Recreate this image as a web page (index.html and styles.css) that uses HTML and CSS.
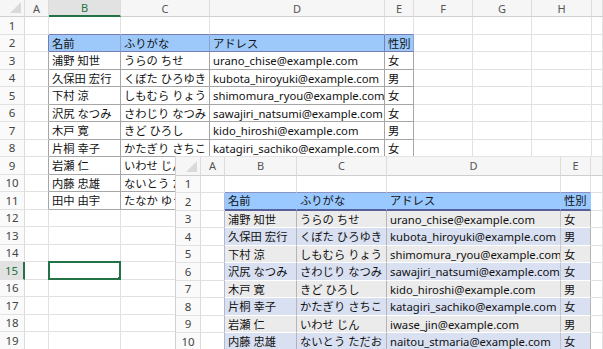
FILE: index.html
```html
<!DOCTYPE html>
<html lang="ja">
<head>
	<meta charset="UTF-8">
	<title>名簿</title>
	<link rel="stylesheet" href="styles.css">
</head>
<body>
	<div class="sheet back">
		<!-- 列見出し -->
		<div class="row">
			<span class="corner"><i></i></span>
			<span class="ch">A</span><span class="ch sel">B</span><span class="ch">C</span><span class="ch">D</span>
			<span class="ch">E</span><span class="ch">F</span><span class="ch">G</span><span class="ch">H</span><span class="ch"></span>
		</div>
		<div class="row">
			<span class="rh">1</span>
			<span class="c"></span><span class="c hb"></span><span class="c hb"></span><span class="c hb"></span>
			<span class="c hb"></span><span class="c"></span><span class="c"></span><span class="c"></span><span class="c"></span>
		</div>
		<div class="row">
			<span class="rh">2</span>
			<span class="c hl"></span><span class="c th">名前</span><span class="c th">ふりがな</span><span class="c th">アドレス</span>
			<span class="c th">性別</span><span class="c"></span><span class="c"></span><span class="c"></span><span class="c"></span>
		</div>
		<div class="row">
			<span class="rh">3</span>
			<span class="c tl"></span><span class="c td">浦野 知世</span><span class="c td">うらの ちせ</span><span class="c td">urano_chise@example.com</span>
			<span class="c td">女</span><span class="c"></span><span class="c"></span><span class="c"></span><span class="c"></span>
		</div>
		<div class="row">
			<span class="rh">4</span>
			<span class="c tl"></span><span class="c td">久保田 宏行</span><span class="c td">くぼた ひろゆき</span><span class="c td">kubota_hiroyuki@example.com</span>
			<span class="c td">男</span><span class="c"></span><span class="c"></span><span class="c"></span><span class="c"></span>
		</div>
		<div class="row">
			<span class="rh">5</span>
			<span class="c tl"></span><span class="c td">下村 涼</span><span class="c td">しもむら りょう</span><span class="c td">shimomura_ryou@example.com</span>
			<span class="c td">女</span><span class="c"></span><span class="c"></span><span class="c"></span><span class="c"></span>
		</div>
		<div class="row">
			<span class="rh">6</span>
			<span class="c tl"></span><span class="c td">沢尻 なつみ</span><span class="c td">さわじり なつみ</span><span class="c td">sawajiri_natsumi@example.com</span>
			<span class="c td">女</span><span class="c"></span><span class="c"></span><span class="c"></span><span class="c"></span>
		</div>
		<div class="row">
			<span class="rh">7</span>
			<span class="c tl"></span><span class="c td">木戸 寛</span><span class="c td">きど ひろし</span><span class="c td">kido_hiroshi@example.com</span>
			<span class="c td">男</span><span class="c"></span><span class="c"></span><span class="c"></span><span class="c"></span>
		</div>
		<div class="row">
			<span class="rh">8</span>
			<span class="c tl"></span><span class="c td">片桐 幸子</span><span class="c td">かたぎり さちこ</span><span class="c td">katagiri_sachiko@example.com</span>
			<span class="c td">女</span><span class="c"></span><span class="c"></span><span class="c"></span><span class="c"></span>
		</div>
		<!-- 9行目以降の右側は前面のシートに隠れる -->
		<div class="row">
			<span class="rh">9</span>
			<span class="c tl"></span><span class="c td">岩瀬 仁</span><span class="c td">いわせ じん</span><span class="c td"></span>
			<span class="c td"></span><span class="c"></span><span class="c"></span><span class="c"></span><span class="c"></span>
		</div>
		<div class="row">
			<span class="rh">10</span>
			<span class="c tl"></span><span class="c td">内藤 忠雄</span><span class="c td">ないとう ただお</span><span class="c td"></span>
			<span class="c td"></span><span class="c"></span><span class="c"></span><span class="c"></span><span class="c"></span>
		</div>
		<div class="row">
			<span class="rh">11</span>
			<span class="c tl"></span><span class="c td">田中 由宇</span><span class="c td">たなか ゆう</span><span class="c td"></span>
			<span class="c td"></span><span class="c"></span><span class="c"></span><span class="c"></span><span class="c"></span>
		</div>
		<div class="row">
			<span class="rh">12</span>
			<span class="c"></span><span class="c"></span><span class="c"></span><span class="c"></span><span class="c"></span>
			<span class="c"></span><span class="c"></span><span class="c"></span><span class="c"></span>
		</div>
		<div class="row">
			<span class="rh">13</span>
			<span class="c"></span><span class="c"></span><span class="c"></span><span class="c"></span><span class="c"></span>
			<span class="c"></span><span class="c"></span><span class="c"></span><span class="c"></span>
		</div>
		<div class="row">
			<span class="rh">14</span>
			<span class="c"></span><span class="c"></span><span class="c"></span><span class="c"></span><span class="c"></span>
			<span class="c"></span><span class="c"></span><span class="c"></span><span class="c"></span>
		</div>
		<div class="row">
			<span class="rh sel">15</span>
			<span class="c"></span><span class="c active"><i class="handle"></i></span><span class="c"></span><span class="c"></span><span class="c"></span>
			<span class="c"></span><span class="c"></span><span class="c"></span><span class="c"></span>
		</div>
		<div class="row">
			<span class="rh">16</span>
			<span class="c"></span><span class="c"></span><span class="c"></span><span class="c"></span><span class="c"></span>
			<span class="c"></span><span class="c"></span><span class="c"></span><span class="c"></span>
		</div>
		<div class="row">
			<span class="rh">17</span>
			<span class="c"></span><span class="c"></span><span class="c"></span><span class="c"></span><span class="c"></span>
			<span class="c"></span><span class="c"></span><span class="c"></span><span class="c"></span>
		</div>
		<div class="row">
			<span class="rh">18</span>
			<span class="c"></span><span class="c"></span><span class="c"></span><span class="c"></span><span class="c"></span>
			<span class="c"></span><span class="c"></span><span class="c"></span><span class="c"></span>
		</div>
		<div class="row">
			<span class="rh">19</span>
			<span class="c"></span><span class="c"></span><span class="c"></span><span class="c"></span><span class="c"></span>
			<span class="c"></span><span class="c"></span><span class="c"></span><span class="c"></span>
		</div>
	</div>

	<!-- テーブル書式を適用した後のシート（上に重ねる） -->
	<div class="sheet front">
		<div class="row">
			<span class="corner"><i></i></span>
			<span class="ch">A</span><span class="ch">B</span><span class="ch">C</span><span class="ch">D</span><span class="ch">E</span><span class="ch"></span>
		</div>
		<div class="row">
			<span class="rh">1</span>
			<span class="c"></span><span class="c hb"></span><span class="c hb"></span><span class="c hb"></span><span class="c hb"></span><span class="c"></span>
		</div>
		<div class="row">
			<span class="rh">2</span>
			<span class="c hl"></span><span class="c fh">名前</span><span class="c fh">ふりがな</span><span class="c fh">アドレス</span><span class="c fh">性別</span><span class="c"></span>
		</div>
		<div class="row odd">
			<span class="rh">3</span>
			<span class="c hl"></span><span class="c fd">浦野 知世</span><span class="c fd">うらの ちせ</span><span class="c fd">urano_chise@example.com</span><span class="c fd">女</span><span class="c"></span>
		</div>
		<div class="row even">
			<span class="rh">4</span>
			<span class="c hl"></span><span class="c fd">久保田 宏行</span><span class="c fd">くぼた ひろゆき</span><span class="c fd">kubota_hiroyuki@example.com</span><span class="c fd">男</span><span class="c"></span>
		</div>
		<div class="row odd">
			<span class="rh">5</span>
			<span class="c hl"></span><span class="c fd">下村 涼</span><span class="c fd">しもむら りょう</span><span class="c fd">shimomura_ryou@example.com</span><span class="c fd">女</span><span class="c"></span>
		</div>
		<div class="row even">
			<span class="rh">6</span>
			<span class="c hl"></span><span class="c fd">沢尻 なつみ</span><span class="c fd">さわじり なつみ</span><span class="c fd">sawajiri_natsumi@example.com</span><span class="c fd">女</span><span class="c"></span>
		</div>
		<div class="row odd">
			<span class="rh">7</span>
			<span class="c hl"></span><span class="c fd">木戸 寛</span><span class="c fd">きど ひろし</span><span class="c fd">kido_hiroshi@example.com</span><span class="c fd">男</span><span class="c"></span>
		</div>
		<div class="row even">
			<span class="rh">8</span>
			<span class="c hl"></span><span class="c fd">片桐 幸子</span><span class="c fd">かたぎり さちこ</span><span class="c fd">katagiri_sachiko@example.com</span><span class="c fd">女</span><span class="c"></span>
		</div>
		<div class="row odd">
			<span class="rh">9</span>
			<span class="c hl"></span><span class="c fd">岩瀬 仁</span><span class="c fd">いわせ じん</span><span class="c fd">iwase_jin@example.com</span><span class="c fd">男</span><span class="c"></span>
		</div>
		<div class="row even">
			<span class="rh">10</span>
			<span class="c hl"></span><span class="c fd">内藤 忠雄</span><span class="c fd">ないとう ただお</span><span class="c fd">naitou_stmaria@example.com</span><span class="c fd">女</span><span class="c"></span>
		</div>
	</div>
</body>
</html>
```

FILE: styles.css
```css
*{
	margin: 0;
	padding: 0;
	box-sizing: border-box;
}
body{
	width: 603px;
	height: 349px;
	overflow: hidden;
	background: #fff;
	position: relative;
	font-family: "Noto Sans", "Noto Sans CJK JP", sans-serif;
	font-size: 11.3px;
	color: #111;
}
.sheet{
	display: grid;
	grid-template-rows: 17px;
	grid-auto-rows: 17.5px;
	background: #fff;
	overflow: hidden;
}
.sheet .row{
	display: contents;
}
.back{
	grid-template-columns: 25px 24px 72px 89px 175px 29px 59px 59px 60px 1fr;
	height: 349px;
}
.front{
	position: absolute;
	left: 175px;
	top: 156px;
	width: 428px;
	height: 193px;
	grid-template-columns: 25px 24px 72px 90px 174px 30px 1fr;
	grid-template-rows: 18.5px;
	border-left: 1px solid #d0d0d0;
	border-top: 1px solid #e4e4e4;
}

/* 見出し */
.corner, .ch, .rh{
	background: #f6f6f6;
	color: #555;
	font-size: 11px;
	border-right: 1px solid #dcdcdc;
	border-bottom: 1px solid #cfcfcf;
	display: flex;
	align-items: center;
	justify-content: center;
	line-height: 1;
}
.rh{
	background: #fafafa;
	color: #444;
	font-size: 11.5px;
	border-bottom-color: #e2e2e2;
}
.corner{
	position: relative;
}
.corner i{
	position: absolute;
	right: 3px;
	bottom: 3px;
	width: 0;
	height: 0;
	border-left: 11px solid transparent;
	border-bottom: 11px solid #dadada;
}
.ch.sel{
	background: #e2e2e2;
	color: #217346;
	border-bottom: 2px solid #217346;
}
.rh.sel{
	background: #e2e2e2;
	color: #217346;
	border-right: 2px solid #217346;
}

/* セル */
.c{
	border-right: 1px solid #e1e1e1;
	border-bottom: 1px solid #e1e1e1;
	padding: 0 3px;
	white-space: nowrap;
	overflow: hidden;
	line-height: 17px;
}
.c.hb{
	border-bottom-color: #7a7db3;
}
.c.hl{
	border-right-color: #7a7db3;
}
.c.tl{
	border-right-color: #a6a6a6;
}
.c.th{
	background: #9cc8fa;
	border-right-color: #8da2cf;
	border-bottom-color: #7a7db3;
}
.c.th:nth-child(5){
	border-right-color: #7a7db3;
}
.c.td{
	border-right-color: #a6a6a6;
	border-bottom-color: #a6a6a6;
}
.c.active{
	position: relative;
	border: 2px solid #217346;
	margin: -1px 0 0 -1px;
}
.c.active .handle{
	position: absolute;
	right: -4px;
	bottom: -4px;
	width: 6px;
	height: 6px;
	background: #217346;
	border: 1px solid #fff;
}

/* テーブル書式 */
.front .c.hb{
	border-bottom-color: #8a93c4;
}
.front .c.hl{
	border-right-color: #b0b8d8;
}
.c.fh{
	background: #99c9ff;
	border-right-color: #99c9ff;
	border-bottom: 2px solid #56609a;
	line-height: 16px;
}
.odd .c.fd{
	background: #ebebeb;
}
.even .c.fd{
	background: #d9e0f2;
}
.c.fd{
	border-right-color: #b5b5b5;
	border-bottom-color: #fff;
}
.front .c.fd:nth-child(5){
	border-right-color: #c4c4c4;
}
```
